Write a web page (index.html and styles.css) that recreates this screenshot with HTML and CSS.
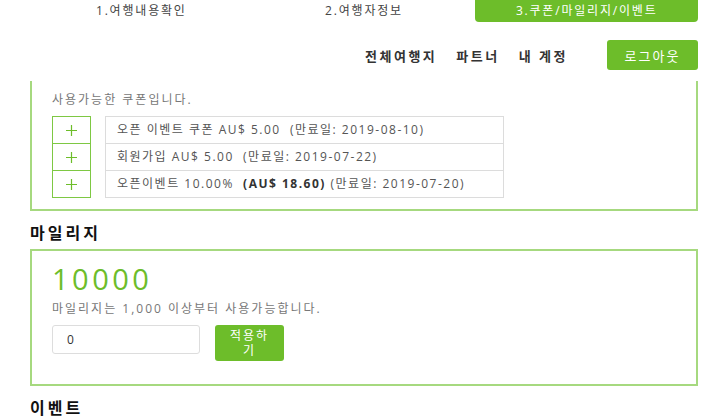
FILE: index.html
```html
<!DOCTYPE html>
<html lang="ko">
<head>
    <meta charset="UTF-8">
    <meta name="viewport" content="width=device-width, initial-scale=1.0">
    <title>쿠폰/마일리지/이벤트</title>
    <link rel="stylesheet" href="styles.css">
</head>
<body>
    <div class="page">
        <div class="steps">
            <div class="step">1.여행내용확인</div>
            <div class="step">2.여행자정보</div>
            <div class="step active">3.쿠폰/마일리지/이벤트</div>
        </div>

        <div class="nav">
            <a href="#">전체여행지</a>
            <a href="#">파트너</a>
            <a href="#">내 계정</a>
            <button class="btn logout">로그아웃</button>
        </div>

        <div class="box coupon-box">
            <p class="note">사용가능한 쿠폰입니다.</p>
            <div class="coupon-list">
                <div class="coupon">
                    <span class="add"><svg width="11" height="11" viewBox="0 0 11 11"><path d="M5.5 0V11M0 5.5H11" stroke="#6dbd2a" stroke-width="1.2"/></svg></span>
                    <span class="info">오픈 이벤트 쿠폰 AU$ 5.00 &nbsp;(만료일: 2019-08-10)</span>
                </div>
                <div class="coupon">
                    <span class="add"><svg width="11" height="11" viewBox="0 0 11 11"><path d="M5.5 0V11M0 5.5H11" stroke="#6dbd2a" stroke-width="1.2"/></svg></span>
                    <span class="info">회원가입 AU$ 5.00 &nbsp;(만료일: 2019-07-22)</span>
                </div>
                <div class="coupon">
                    <span class="add"><svg width="11" height="11" viewBox="0 0 11 11"><path d="M5.5 0V11M0 5.5H11" stroke="#6dbd2a" stroke-width="1.2"/></svg></span>
                    <span class="info">오픈이벤트 10.00% &nbsp;<b>(AU$ 18.60)</b> (만료일: 2019-07-20)</span>
                </div>
            </div>
        </div>

        <h3>마일리지</h3>
        <div class="box mileage-box">
            <div class="points">10000</div>
            <p class="note">마일리지는 1,000 이상부터 사용가능합니다.</p>
            <div class="use-row">
                <input type="text" value="0">
                <button class="btn apply">적용하기</button>
            </div>
        </div>

        <h3>이벤트</h3>
    </div>
</body>
</html>
```

FILE: styles.css
```css
body {
    margin: 0;
    background-color: white;
    font-family: "Open Sans", "Noto Sans CJK KR", sans-serif;
    letter-spacing: 1.5px;
    color: #333;
}

.page {
    width: 668px;
    margin-left: 30px;
}

.steps {
    display: flex;
    height: 22px;
}

.step {
    flex: 1;
    text-align: center;
    font-size: 12px;
    letter-spacing: 1.8px;
    line-height: 22px;
    color: #444;
}

.step.active {
    background-color: #6dbd2a;
    color: white;
    border-radius: 0 0 4px 4px;
}

.nav {
    display: flex;
    justify-content: flex-end;
    align-items: center;
    margin-top: 18px;
    height: 30px;
}

.nav a {
    margin-left: 19px;
    font-size: 13px;
    font-weight: bold;
    letter-spacing: 2.5px;
    color: #333;
    text-decoration: none;
}

.btn {
    background-color: #6dbd2a;
    color: white;
    border: none;
    border-radius: 3px;
    font-family: inherit;
    letter-spacing: 2px;
    cursor: pointer;
}

.logout {
    margin-left: 39px;
    width: 91px;
    height: 30px;
    font-size: 13px;
}

.box {
    border: 2px solid #a6d97f;
    padding: 0 20px;
}

.coupon-box {
    border-top: none;
    margin-top: 11px;
    padding-top: 9px;
    padding-bottom: 11px;
}

.note {
    margin: 0;
    font-size: 12px;
    letter-spacing: 2px;
    color: #777;
}

.coupon-list {
    margin-top: 9px;
}

.coupon {
    display: flex;
    height: 28px;
    margin-top: -1px;
}

.add {
    display: flex;
    justify-content: center;
    align-items: center;
    width: 37px;
    border: 1px solid #7ec843;
}

.info {
    width: 386px;
    margin-left: 14px;
    padding-left: 11px;
    border: 1px solid #dcdcdc;
    font-size: 12px;
    letter-spacing: 1.5px;
    line-height: 26px;
    color: #555;
    white-space: nowrap;
}

.info b {
    color: #333;
}

h3 {
    margin: 11px 0 5px;
    font-size: 16px;
    line-height: 22px;
    letter-spacing: 3px;
    color: #111;
}

.mileage-box {
    padding-top: 11px;
    padding-bottom: 23px;
}

.points {
    font-size: 29px;
    letter-spacing: 3.5px;
    line-height: 34px;
    color: #6dbd2a;
}

.mileage-box .note {
    margin-top: 3px;
}

.use-row {
    display: flex;
    align-items: flex-start;
    margin-top: 8px;
}

.use-row input {
    width: 148px;
    height: 29px;
    box-sizing: border-box;
    padding: 0 14px;
    border: 1px solid #ddd;
    border-radius: 3px;
    font-family: inherit;
    font-size: 12px;
    color: #333;
}

.apply {
    width: 69px;
    height: 36px;
    margin-left: 15px;
    padding: 2px 12px;
    font-size: 12px;
    line-height: 15px;
}
```
